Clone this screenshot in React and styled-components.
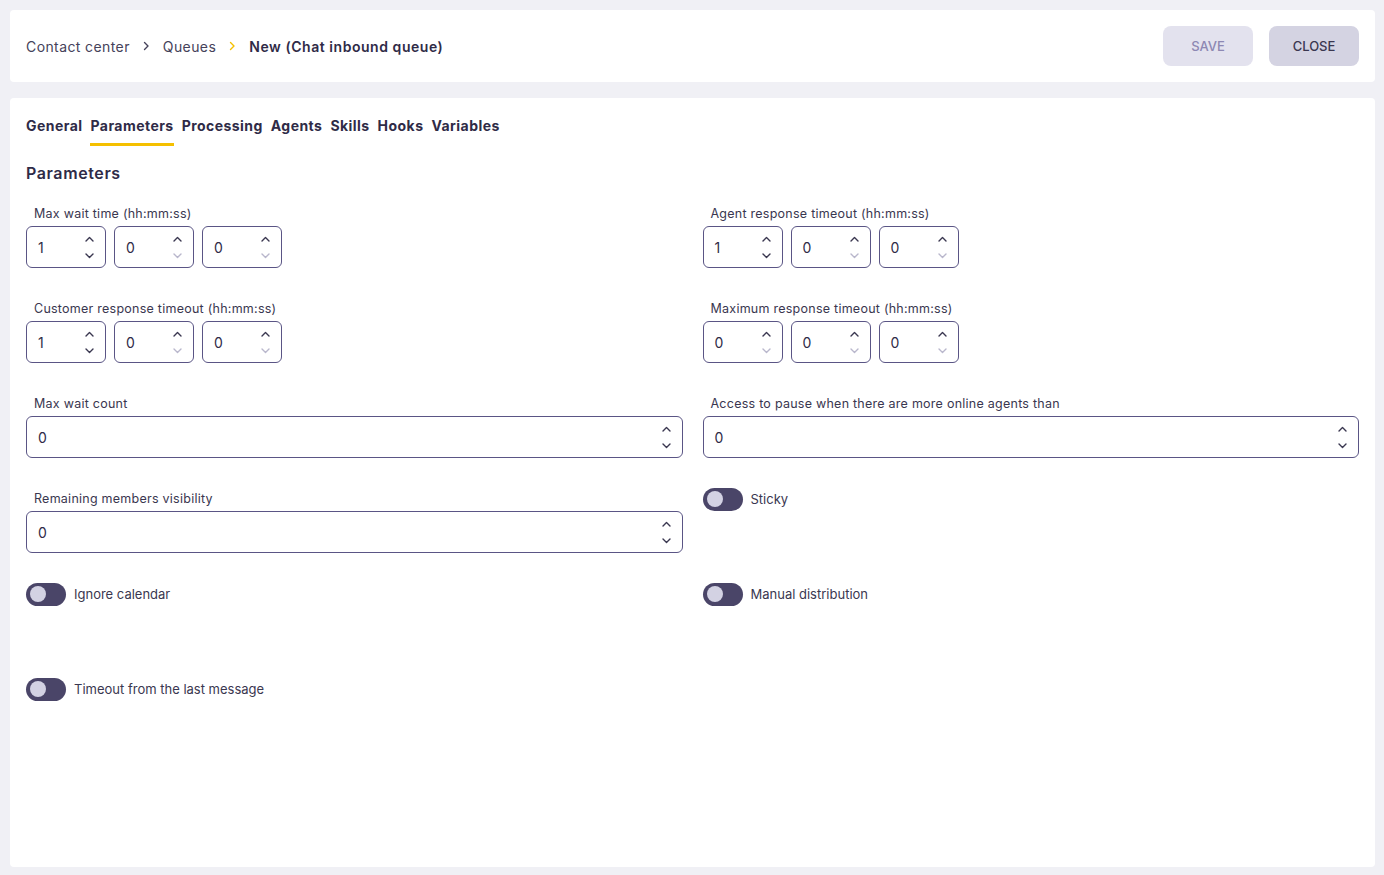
import React from 'react';
import styled, { createGlobalStyle } from 'styled-components';

const GlobalStyle = createGlobalStyle`
  * { box-sizing: border-box; }
  body {
    margin: 0;
    background: #f0f0f5;
    font-family: Inter, "Open Sans", sans-serif;
    color: #2f2b47;
  }
`;

const Page = styled.div`
  display: flex;
  flex-direction: column;
  gap: 16px;
  padding: 10px 9px 8px 10px;
  min-height: 875px;
`;

const Header = styled.header`
  height: 72px;
  display: flex;
  align-items: center;
  justify-content: space-between;
  padding: 0 16px;
  background: #fff;
  border-radius: 4px;
`;

const Crumbs = styled.nav`
  display: flex;
  align-items: center;
  gap: 13px;
  font-size: 14px;
  letter-spacing: 0.4px;
  color: #45425a;
`;

const Crumb = styled.span`
  font-weight: ${p => (p.$current ? 600 : 400)};
  letter-spacing: ${p => (p.$current ? '0.55px' : '0.4px')};
  color: ${p => (p.$current ? '#2f2b47' : '#45425a')};
`;

const Sep = styled.span`
  display: flex;
  color: ${p => (p.$accent ? '#f5c000' : '#45425a')};
`;

const Actions = styled.div`
  display: flex;
  gap: 16px;
`;

const Button = styled.button`
  width: 90px;
  height: 40px;
  border: none;
  border-radius: 8px;
  font-family: inherit;
  font-size: 13px;
  font-weight: 500;
  text-transform: uppercase;
  background: ${p => (p.$disabled ? '#e3e2ee' : '#d4d3e2')};
  color: ${p => (p.$disabled ? '#8d88b3' : '#3a3750')};
  cursor: pointer;
`;

const Card = styled.main`
  flex: 1;
  background: #fff;
  border-radius: 4px;
  padding: 18px 16px 16px;
`;

const Tabs = styled.div`
  display: flex;
  gap: 8px;
`;

const Tab = styled.div`
  font-size: 14px;
  font-weight: 700;
  line-height: 20px;
  letter-spacing: 0.45px;
  padding-bottom: 7px;
  border-bottom: 3px solid ${p => (p.$active ? '#f5c000' : 'transparent')};
  color: #2f2b47;
`;

const Title = styled.h2`
  margin: 16px 0 21px;
  font-size: 16px;
  line-height: 22px;
  font-weight: 600;
  letter-spacing: 0.6px;
`;

const Grid = styled.div`
  display: grid;
  grid-template-columns: 1fr 1fr;
  grid-auto-rows: 63px;
  column-gap: 20px;
  row-gap: 32px;
`;

const Field = styled.div`
  display: flex;
  flex-direction: column;
  gap: 5px;
`;

const Label = styled.label`
  padding-left: 8px;
  padding-top: 1px;
  margin-bottom: -1px;
  font-size: 12.5px;
  line-height: 16px;
  letter-spacing: 0.25px;
  color: #3a3750;
`;

const TimeGroup = styled.div`
  display: flex;
  gap: 8px;
`;

const NumberBox = styled.div`
  width: ${p => (p.$wide ? '100%' : '80px')};
  height: 42px;
  display: flex;
  align-items: center;
  justify-content: space-between;
  padding: 0 12px 0 11px;
  border: 1px solid #5a5585;
  border-radius: 6px;
  font-size: 14px;
  color: #2f2b47;
`;

const Spinner = styled.div`
  display: flex;
  flex-direction: column;
  gap: 11px;
  margin-right: -1px;
`;

const Arrow = styled.svg`
  display: block;
  width: 9px;
  height: 6px;
  color: ${p => (p.$off ? '#b9b7cc' : '#3a3750')};
`;

const ToggleRow = styled.div`
  display: flex;
  align-items: center;
  gap: 8px;
  height: 16px;
  margin-top: 1px;
  font-size: 13px;
  color: #3a3750;
`;

const Track = styled.span`
  flex: none;
  position: relative;
  width: 40px;
  height: 23px;
  border-radius: 12px;
  background: #4a4568;
`;

const Knob = styled.span`
  position: absolute;
  left: 4px;
  top: 3.5px;
  width: 16px;
  height: 16px;
  border-radius: 50%;
  background: #d3d2e3;
`;

const Chevron = () => (
  <svg width="7" height="10" viewBox="0 0 7 10" fill="none">
    <path d="M1.5 1.5 L5 5 L1.5 8.5" stroke="currentColor" strokeWidth="1.4" strokeLinecap="round" strokeLinejoin="round" />
  </svg>
);

const Up = ({ off }) => (
  <Arrow $off={off} viewBox="0 0 9 6" fill="none">
    <path d="M1 5 L4.5 1.5 L8 5" stroke="currentColor" strokeWidth="1.4" strokeLinecap="round" strokeLinejoin="round" />
  </Arrow>
);

const Down = ({ off }) => (
  <Arrow $off={off} viewBox="0 0 9 6" fill="none">
    <path d="M1 1 L4.5 4.5 L8 1" stroke="currentColor" strokeWidth="1.4" strokeLinecap="round" strokeLinejoin="round" />
  </Arrow>
);

const NumberInput = ({ value, wide, min }) => (
  <NumberBox $wide={wide}>
    <span>{value}</span>
    <Spinner>
      <Up />
      <Down off={min && value === 0} />
    </Spinner>
  </NumberBox>
);

const TimeField = ({ label, values }) => (
  <Field>
    <Label>{label}</Label>
    <TimeGroup>
      {values.map((v, i) => (
        <NumberInput key={i} value={v} min />
      ))}
    </TimeGroup>
  </Field>
);

const WideField = ({ label }) => (
  <Field>
    <Label>{label}</Label>
    <NumberInput value={0} wide />
  </Field>
);

const Toggle = ({ label }) => (
  <ToggleRow>
    <Track>
      <Knob />
    </Track>
    {label}
  </ToggleRow>
);

const tabs = ['General', 'Parameters', 'Processing', 'Agents', 'Skills', 'Hooks', 'Variables'];

export default function App() {
  return (
    <>
      <GlobalStyle />
      <Page>
        <Header>
          <Crumbs>
            <Crumb>Contact center</Crumb>
            <Sep><Chevron /></Sep>
            <Crumb>Queues</Crumb>
            <Sep $accent><Chevron /></Sep>
            <Crumb $current>New (Chat inbound queue)</Crumb>
          </Crumbs>
          <Actions>
            <Button $disabled>Save</Button>
            <Button>Close</Button>
          </Actions>
        </Header>
        <Card>
          <Tabs>
            {tabs.map(t => (
              <Tab key={t} $active={t === 'Parameters'}>{t}</Tab>
            ))}
          </Tabs>
          <Title>Parameters</Title>
          <Grid>
            <TimeField label="Max wait time (hh:mm:ss)" values={[1, 0, 0]} />
            <TimeField label="Agent response timeout (hh:mm:ss)" values={[1, 0, 0]} />
            <TimeField label="Customer response timeout (hh:mm:ss)" values={[1, 0, 0]} />
            <TimeField label="Maximum response timeout (hh:mm:ss)" values={[0, 0, 0]} />
            <WideField label="Max wait count" />
            <WideField label="Access to pause when there are more online agents than" />
            <WideField label="Remaining members visibility" />
            <Toggle label="Sticky" />
            <Toggle label="Ignore calendar" />
            <Toggle label="Manual distribution" />
            <Toggle label="Timeout from the last message" />
          </Grid>
        </Card>
      </Page>
    </>
  );
}
